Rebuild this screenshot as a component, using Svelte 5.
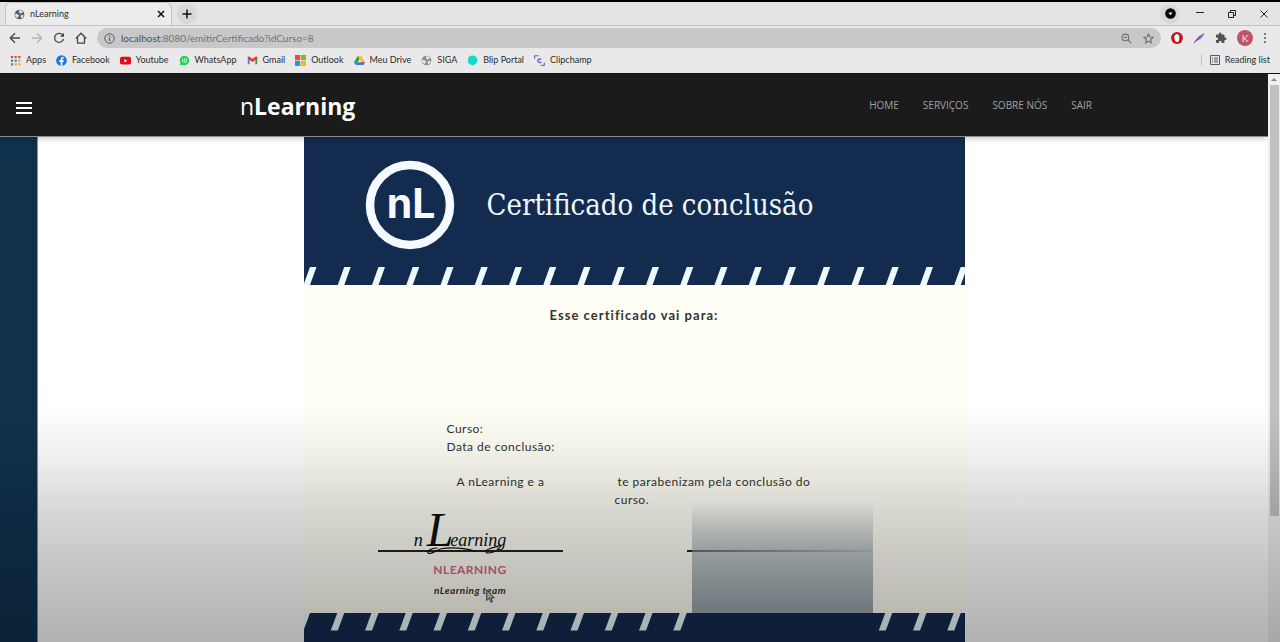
<script>
  const bookmarks = ['Apps', 'Facebook', 'Youtube', 'WhatsApp', 'Gmail', 'Outlook', 'Meu Drive', 'SIGA', 'Blip Portal', 'Clipchamp'];
  const links = ['HOME', 'SERVIÇOS', 'SOBRE NÓS', 'SAIR'];
  const pitch = 34.25;
  const stripes = Array.from({ length: 21 }, (_, i) => i * pitch);
  const dots = [0, 1, 2, 3, 4, 5, 6, 7, 8];
  const dotColors = ['#d9463b', '#d9463b', '#d9463b', '#3c9b57', '#4a7fd6', '#e0a92c', '#3c9b57', '#e0a92c', '#e0a92c'];
</script>

{#snippet globe(color)}
  <svg class="ico" viewBox="0 0 12 12" aria-hidden="true">
    <circle cx="6" cy="6" r="5.3" fill={color} />
    <path d="M1.300 5.200c1.300-.2 2 .8 3.300.9.9.1 1 1.200.2 1.800-.5.4-.3 1.500-1 2C2.200 9 1 7.300 1.300 5.200zM5.500 1.500c1.600-.5 3.600.4 4.600 2l-1.300.3c-.9.2-.4 1.300-1.500 1.200-.9-.1-1.600-.4-1.300-1.300.2-.8-1-.9-.5-2.200zM7.500 7c1-.6 2.300-.6 3-.2-.3 1.400-1.200 2.600-2.500 3.100-.6-.7-1.100-2.200-.5-2.900z" fill="#ececec" />
  </svg>
{/snippet}

{#snippet bookmarkIcon(name)}
  {#if name === 'Apps'}
    <svg class="ico" viewBox="0 0 12 12" aria-hidden="true">
      {#each dots as d}
        <rect x={1 + (d % 3) * 4} y={1 + Math.floor(d / 3) * 4} width="2.4" height="2.4" fill={dotColors[d]} />
      {/each}
    </svg>
  {:else if name === 'Facebook'}
    <svg class="ico" viewBox="0 0 12 12" aria-hidden="true">
      <circle cx="6" cy="6" r="5.8" fill="#1877d8" />
      <path d="M5.100 11.800V7.500H3.600V5.800h1.500V4.600c0-1.500.9-2.300 2.200-2.300.6 0 1.200.1 1.200.1v1.400h-.7c-.7 0-.9.400-.9.900v1.100h1.600l-.3 1.700H6.900v4.300z" fill="#fff" />
    </svg>
  {:else if name === 'Youtube'}
    <svg class="ico" viewBox="0 0 12 12" aria-hidden="true">
      <rect y="2" width="12" height="8.400" rx="2" fill="#e5091b" />
      <path d="M4.700 4.300v3.800L8 6.200z" fill="#fff" />
    </svg>
  {:else if name === 'WhatsApp'}
    <svg class="ico" viewBox="0 0 12 12" aria-hidden="true">
      <path d="M6 .8a5.200 5.200 0 1 1-2.500 9.800L.9 11.300l.7-2.500A5.200 5.200 0 0 1 6 .8z" fill="#27ce59" />
      <path d="M4 4v4M5.800 4.200h2.300v3.600H5.800z" fill="none" stroke="#d9f7e2" stroke-width=".9" />
    </svg>
  {:else if name === 'Gmail'}
    <svg class="ico" viewBox="0 0 12 12" aria-hidden="true">
      <path d="M.8 3v7h2.100V4.600z" fill="#4285f4" />
      <path d="M11.200 3v7H9.100V4.600z" fill="#34a04f" />
      <path d="M.8 2.800c0-1.200 1.300-1.500 2.100-.8L6 4.300 9.100 2c.8-.7 2.100-.4 2.100.8v1L6 7.700.8 3.800z" fill="#df3a30" />
    </svg>
  {:else if name === 'Outlook'}
    <svg class="ico" viewBox="0 0 12 12" aria-hidden="true">
      <path d="M0 0h5.600v5.600H0z" fill="#ee4e24" />
      <path d="M6.400 0H12v5.600H6.400z" fill="#7fb93a" />
      <path d="M0 6.400h5.600V12H0z" fill="#1c9fe2" />
      <path d="M6.400 6.400H12V12H6.400z" fill="#fbb813" />
    </svg>
  {:else if name === 'Meu Drive'}
    <svg class="ico" viewBox="0 0 12 12" aria-hidden="true">
      <path d="M4 1h4L4.100 7.700 2 11 0 7.800z" fill="#1ea362" />
      <path d="M4 1h4l4 6.800H8z" fill="#fbc02d" />
      <path d="M3.900 7.800H12L10 11H2z" fill="#3c7de6" />
      <path d="M8 7.800h4L10 11z" fill="#e0483c" />
    </svg>
  {:else if name === 'SIGA'}
    {@render globe('#8d8d8d')}
  {:else if name === 'Blip Portal'}
    <svg class="ico" viewBox="0 0 12 12" aria-hidden="true">
      <path d="M6 .6c3.200 0 5.200 2 5.200 5 0 2.700-1.500 4.400-3.700 5L6 11.600l-1.500-1C2.300 10 .8 8.300.8 5.600c0-3 2-5 5.200-5z" fill="#17d6cb" />
    </svg>
  {:else}
    <svg class="ico" viewBox="0 0 12 12" fill="none" aria-hidden="true">
      <path d="M.8 4V.8h4.400" stroke="#5c6fd6" stroke-width="1.300" />
      <path d="M7.500 11.300h3.800V8.200" stroke="#a35fd0" stroke-width="1.300" />
      <path d="M7.800 5.100a2 2 0 1 0 0 2.400" stroke="#6a4fd0" stroke-width="1.400" />
    </svg>
  {/if}
{/snippet}

<div class="window">
  <header class="chrome">
    <div class="tabs">
      <div class="tab">
        {@render globe('#5a5d61')}
        <span class="tab-title">nLearning</span>
        <button class="plain" aria-label="Fechar guia">
          <svg width="8" height="8" viewBox="0 0 8 8"><path d="M1 1l6 6M7 1L1 7" stroke="#111" stroke-width="1.500" /></svg>
        </button>
      </div>
      <button class="round new-tab" aria-label="Nova guia">
        <svg width="10" height="10" viewBox="0 0 10 10"><path d="M5 .5v9M.5 5h9" stroke="#111" stroke-width="1.500" /></svg>
      </button>
      <div class="controls">
        <button class="round" aria-label="Pesquisar guias">
          <svg width="11" height="11" viewBox="0 0 11 11"><circle cx="5.500" cy="5.500" r="5.300" fill="#050505" /><path d="M3.500 4.400h4L5.500 7.200z" fill="#fff" /></svg>
        </button>
        <button class="plain" aria-label="Minimizar">
          <svg width="8" height="8" viewBox="0 0 8 8"><path d="M0 2.500h8" stroke="#222" /></svg>
        </button>
        <button class="plain" aria-label="Restaurar">
          <svg width="8" height="8" viewBox="0 0 8 8" fill="none" stroke="#222"><path d="M.5 2.500h5v5h-5zM2.500 2V.5h5v5H6" /></svg>
        </button>
        <button class="plain" aria-label="Fechar">
          <svg width="8" height="8" viewBox="0 0 8 8"><path d="M.5.5l7 7M7.500.5l-7 7" stroke="#222" /></svg>
        </button>
      </div>
    </div>

    <div class="toolbar">
      <button class="plain" aria-label="Voltar">
        <svg width="12" height="12" viewBox="0 0 12 12" fill="none" stroke="#44474b" stroke-width="1.300"><path d="M11 6H1.500M6 1.300L1.300 6 6 10.700" /></svg>
      </button>
      <button class="plain" aria-label="Avançar">
        <svg width="12" height="12" viewBox="0 0 12 12" fill="none" stroke="#b3b3b3" stroke-width="1.300"><path d="M1 6h9.500M6 1.300L10.700 6 6 10.700" /></svg>
      </button>
      <button class="plain" aria-label="Recarregar">
        <svg width="12" height="12" viewBox="0 0 12 12"><path d="M10 3.500A4.500 4.500 0 1 0 10.500 7" fill="none" stroke="#44474b" stroke-width="1.300" /><path d="M11 .7v4.100H6.900z" fill="#44474b" /></svg>
      </button>
      <button class="plain" aria-label="Página inicial">
        <svg width="12" height="12" viewBox="0 0 12 12" fill="none" stroke="#44474b" stroke-width="1.300"><path d="M.8 6.500L6 1.200l5.200 5.300M2.500 5.500v5.600h7V5.500" /></svg>
      </button>
      <div class="address">
        <svg width="11" height="11" viewBox="0 0 11 11" fill="none" stroke="#55585b" aria-hidden="true"><circle cx="5.500" cy="5.500" r="4.700" /><path d="M5.500 4.900v3.200M5.500 2.700v1.200" stroke-width="1.200" /></svg>
        <span class="url"><span class="host">localhost</span>:8080/emitirCertificado?idCurso=8</span>
        <button class="plain" aria-label="Zoom">
          <svg width="11" height="11" viewBox="0 0 11 11" fill="none" stroke="#6f7275" stroke-width="1.100"><circle cx="4.400" cy="4.400" r="3.300" /><path d="M7 7l3.300 3.300M2.800 4.400H6" /></svg>
        </button>
        <button class="plain" aria-label="Adicionar aos favoritos">
          <svg width="11" height="11" viewBox="0 0 12 12" fill="none" stroke="#6f7275" stroke-width="1.200"><path d="M6 1l1.500 3.300 3.600.4-2.700 2.400.8 3.600L6 8.900l-3.200 1.800.8-3.600L.9 4.700l3.600-.4z" /></svg>
        </button>
      </div>
      <div class="extensions">
        <button class="plain" aria-label="Bloqueador">
          <svg width="12" height="12" viewBox="0 0 12 12"><circle cx="6" cy="6" r="5.900" fill="#c3101d" /><path d="M3.300 5.800V3.700h.9V2.500h1v-.6h1.200v.6h1v1h.9v3.500c0 1.900-.9 2.900-2.500 2.900S3.500 8.300 3.300 5.800z" fill="#fff" /></svg>
        </button>
        <button class="plain" aria-label="Anotações">
          <svg width="12" height="12" viewBox="0 0 12 12"><path d="M.8 11.200C2.500 7 6.500 2.500 11.500 1 10.800 4.500 7 8.500 3 9z" fill="#9a7bc0" /><path d="M.8 11.200L8.500 3.500" stroke="#5c3c8c" stroke-width=".8" /></svg>
        </button>
        <button class="plain" aria-label="Extensões">
          <svg width="12" height="12" viewBox="0 0 24 24"><path d="M20.500 11H19V7c0-1.100-.9-2-2-2h-4V3.500a2.500 2.500 0 0 0-5 0V5H4c-1.100 0-2 .9-2 2v3.800h1.500a2.700 2.700 0 0 1 0 5.400H2V20c0 1.100.9 2 2 2h3.800v-1.500a2.700 2.700 0 0 1 5.400 0V22H17c1.100 0 2-.9 2-2v-4h1.500a2.500 2.500 0 0 0 0-5z" fill="#505356" /></svg>
        </button>
        <button class="plain avatar" aria-label="Perfil">K</button>
        <button class="plain" aria-label="Menu">
          <svg width="4" height="12" viewBox="0 0 4 12" fill="#505356"><circle cx="2" cy="2" r="1" /><circle cx="2" cy="6" r="1" /><circle cx="2" cy="10" r="1" /></svg>
        </button>
      </div>
    </div>

    <nav class="bookmarks" aria-label="Favoritos">
      {#each bookmarks as name}
        <a href="#top">{@render bookmarkIcon(name)}{name}</a>
      {/each}
      <a href="#top" class="reading">
        <svg width="10" height="10" viewBox="0 0 10 10" fill="none" stroke="#55585b" aria-hidden="true"><path d="M.5.5h9v9h-9zM2 3h1M4 3h4M2 5h1M4 5h4M2 7h1M4 7h4" /></svg>Reading list
      </a>
    </nav>
  </header>

  <div class="viewport">
    <div class="page" id="top">
      <header class="site">
        <button class="plain burger" aria-label="Abrir menu"><i></i><i></i><i></i></button>
        <div class="site-inner">
          <a class="brand" href="#top">n<b>Learning</b></a>
          <nav class="links">
            {#each links as link}<a href="#top">{link}</a>{/each}
          </nav>
        </div>
      </header>

      <div class="content">
        <aside></aside>
        <main>
          <article class="certificate">
            <header class="cert-head">
              <div class="cert-title">
                <svg class="seal" width="90" height="90" viewBox="0 0 90 90" aria-label="nL" role="img">
                  <circle cx="45" cy="45" r="40" fill="none" stroke="#f5faff" stroke-width="8.500" />
                  <text x="46" y="58" text-anchor="middle">nL</text>
                </svg>
                <h1>Certificado de conclusão</h1>
              </div>
              <svg class="stripes" viewBox="0 0 661 18" preserveAspectRatio="none" aria-hidden="true">
                {#each stripes as x}<path d="M{x - 0.5} 18h6.500l6.500-18h-6.500z" fill="#effaff" />{/each}
              </svg>
            </header>

            <section class="cert-body">
              <h2>Esse certificado vai para:</h2>
              <div class="details">
                <p>Curso:</p>
                <p>Data de conclusão:</p>
              </div>
              <div class="praise">
                <p>A nLearning e a</p>
                <p class="wish">te parabenizam pela conclusão do curso.</p>
              </div>
              <div class="signatures">
                <div class="signer">
                  <div class="ink">
                    <span>n</span><span class="cap">L</span><span>earning</span>
                    <svg class="flourish" width="84" height="10" viewBox="0 0 84 10" fill="none" stroke="#111" stroke-linecap="round" aria-hidden="true">
                      <path d="M10 3C4 3 0 6 1 8c3 2 8-2 12-4 10-2 24-1 35 2" stroke-width="1.200" />
                      <path d="M74 1c-3 4-8 7-13 7-3 0-3-3 1-4 5-2 10-2 15-6" stroke-width="1.200" />
                    </svg>
                  </div>
                  <strong>NLEARNING</strong>
                  <em>nLearning team</em>
                  <svg class="pointer" width="9" height="14" viewBox="0 0 9 14" aria-hidden="true"><path d="M.7.8v10.700l2.500-2.200 1.700 3.900 1.600-.7-1.700-3.700h3.400z" fill="#c9cac6" stroke="#333" stroke-width=".9" /></svg>
                </div>
                <div class="signer partner"><div class="ink"></div></div>
              </div>
            </section>

            <footer class="cert-foot">
              <svg class="stripes" viewBox="0 0 661 18" preserveAspectRatio="none" aria-hidden="true">
                {#each stripes as x, i}
                  {#if i < 12 || i > 16}<path d="M{x - 7.500} 17.500h7l6.500-17.500h-7z" fill="#effaff" />{/if}
                {/each}
              </svg>
            </footer>
            <div class="redacted"></div>
          </article>
        </main>
      </div>
    </div>
    <div class="scrollbar" aria-hidden="true"><span class="up"></span><span class="thumb"></span></div>
    <div class="shade"></div>
  </div>
</div>

<style>
  :global(body) { margin: 0; }
  * { box-sizing: border-box; }
  p, h1, h2 { margin: 0; }
  a { color: inherit; text-decoration: none; }
  svg { display: block; flex: none; }

  .window {
    display: flex;
    flex-direction: column;
    height: 100vh;
    overflow: hidden;
    font-family: "Open Sans", "Noto Sans", sans-serif;
  }
  .plain, .round {
    display: grid;
    place-items: center;
    padding: 0;
    border: 0;
    background: none;
    font: inherit;
  }
  .round { width: 20px; height: 20px; border-radius: 50%; background: #d8d8d8; }

  .chrome { border-top: 2px solid #000; background: #e9e9e9; color: #2c2c2c; font: 9px/12px Lato, "Open Sans", sans-serif; }
  .tabs {
    display: flex;
    align-items: center;
    height: 24px;
    padding-left: 5px;
    border-bottom: 1px solid #c4c4c4;
    background: #e4e4e4;
  }
  .tab {
    display: flex;
    align-items: center;
    gap: 5px;
    width: 167px;
    height: 23px;
    padding: 0 6px 0 8px;
    border: 1px solid #c4c4c4;
    border-bottom: 0;
    border-radius: 6px 6px 0 0;
    background: #ececec;
  }
  .tab-title { flex: 1; }
  .new-tab { margin-left: 5px; }
  .controls { display: flex; align-items: center; gap: 24px; margin-left: auto; padding-right: 12px; }
  .controls .round { margin-right: -8px; }
  .ico { width: 11px; height: 11px; }

  .toolbar { display: flex; align-items: center; gap: 10px; height: 24px; padding: 0 13px 0 9px; }
  .address {
    display: flex;
    flex: 1;
    align-items: center;
    gap: 11px;
    height: 20px;
    padding: 0 7px;
    border-radius: 10px;
    background: #c8c8c8;
    color: #717376;
    font-size: 10px;
  }
  .url { flex: 1; margin-left: -5px; }
  .host { color: #4c4f52; }
  .extensions { display: flex; align-items: center; gap: 10px; }
  .avatar { width: 16px; height: 16px; border-radius: 50%; background: #bf5468; color: #f5e3e6; font-size: 10px; }

  .bookmarks { display: flex; align-items: center; gap: 10px; height: 23px; padding: 0 10px 3px; }
  .bookmarks a { display: flex; align-items: center; gap: 5px; white-space: nowrap; }
  .bookmarks .reading { margin-left: auto; padding-left: 8px; border-left: 1px solid #c4c4c4; }

  .viewport { position: relative; display: flex; flex: 1; min-height: 0; border-top: 1px solid #111; }
  .page { display: flex; flex: 1; flex-direction: column; min-width: 0; overflow: hidden; background: #fff; }
  .site {
    position: relative;
    z-index: 1;
    display: flex;
    flex: none;
    align-items: center;
    height: 63px;
    padding-left: 16px;
    border-bottom: 1px solid #8a8a8a;
    background: #1b1b1b;
    box-shadow: 0 2px 6px rgb(0 0 0 / 20%);
    color: #fff;
  }
  .burger { gap: 3px; width: 16px; padding-top: 5px; }
  .burger i { width: 16px; height: 2px; background: #fff; }
  .site-inner { display: flex; flex: 1; align-items: center; justify-content: space-between; padding: 0 176px 0 208px; }
  .brand { padding-top: 2px; font-size: 23px; line-height: 32px; }
  .links { display: flex; gap: 24px; color: #a0a0a0; font-size: 10px; line-height: 14px; }

  .content { display: grid; flex: 1; grid-template-columns: 38px 1fr 38px; min-height: 0; }
  aside { background: linear-gradient(#0f314c, #11314e); border-right: 1px solid #8496a4; }
  main { display: flex; justify-content: center; min-width: 0; }

  .certificate {
    position: relative;
    flex: none;
    width: 661px;
    max-width: 100%;
    background: #fffff6;
    color: #33332d;
    font: 400 12px/18px Lato, sans-serif;
    letter-spacing: 0.04em;
  }
  .cert-head, .cert-foot { background: #142b50; }
  .cert-title { display: flex; align-items: center; gap: 32px; height: 130px; padding: 6px 0 0 61px; }
  .seal text { fill: #f5faff; font: 700 41px Inter, sans-serif; letter-spacing: 0; }
  h1 { color: #eff8ff; font: 400 29px/40px "DejaVu Serif Condensed", "DejaVu Serif", serif; letter-spacing: 0; white-space: nowrap; }
  .stripes { width: 100%; height: 18px; }

  .cert-body { padding: 21px 0 13px; }
  h2 { color: #33332f; font: 700 13px/18px Lato, sans-serif; letter-spacing: 0.08em; text-align: center; }
  .details { padding: 96px 0 17px 143px; }
  .praise { display: grid; grid-template-columns: 158px 210px; padding-left: 153px; }
  .wish { text-indent: 3px; }
  .signatures { display: flex; justify-content: space-between; padding: 0 93px 0 74px; }
  .signer { position: relative; display: flex; flex-direction: column; align-items: center; width: 185px; }
  .ink {
    position: relative;
    display: flex;
    align-items: baseline;
    justify-content: center;
    width: 100%;
    height: 43px;
    margin-bottom: 8px;
    padding-right: 20px;
    border-bottom: 2px solid #23231f;
    color: #111;
    font: italic 400 18px/42px "Liberation Serif", serif;
    letter-spacing: 0;
  }
  .ink .cap { margin: 0 -3px 0 4px; font-size: 48px; }
  .flourish { position: absolute; left: 49px; top: 36px; }
  .signer strong { color: #d9648a; font-size: 12px; line-height: 20px; }
  .signer em { font-size: 10px; font-weight: 700; line-height: 20px; }
  .pointer { position: absolute; left: 108px; top: 80px; }

  .cert-foot { height: 148px; }
  .redacted {
    position: absolute;
    top: 363px;
    left: 388px;
    width: 181px;
    height: 130px;
    background:
      linear-gradient(90deg, transparent, rgb(190 197 196 / 90%)) 0 49px / 100% 4px no-repeat,
      linear-gradient(rgb(170 180 180 / 0%), rgb(148 162 168 / 60%) 50px, rgb(140 153 163 / 90%) 113px, transparent 113px);
  }

  .scrollbar { display: flex; flex-direction: column; align-items: center; gap: 4px; width: 12px; padding: 4px 2px; background: #f0f0f0; }
  .up { border: 3px solid transparent; border-top: 0; border-bottom-color: #888; }
  .thumb { width: 9px; height: 77%; background: #c1c1c1; }
  .shade {
    position: absolute;
    inset: auto 0 0;
    height: 236px;
    background: linear-gradient(transparent, rgb(0 0 0 / 7%) 23%, rgb(0 0 0 / 16%) 46%, rgb(0 0 0 / 23%) 70%, rgb(0 0 0 / 30%));
    pointer-events: none;
  }
</style>
